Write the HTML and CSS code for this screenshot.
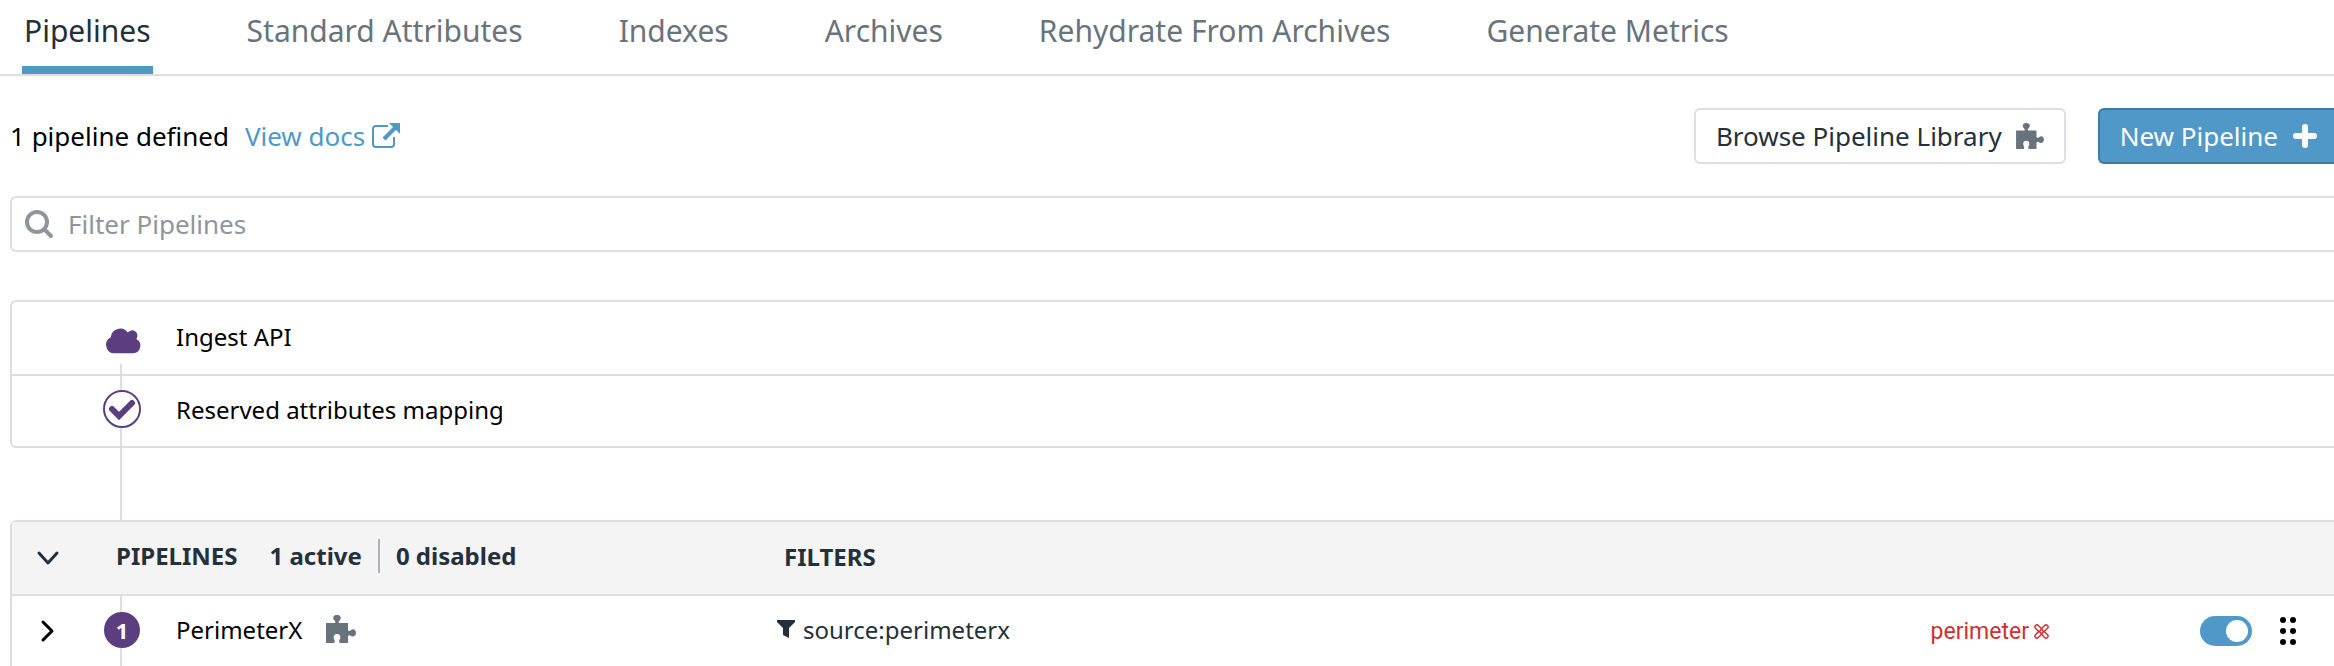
FILE: index.html
```html
<!DOCTYPE html>
<html lang="en">
<head>
    <meta charset="utf-8">
    <title>Pipelines</title>
    <link rel="stylesheet" href="styles.css">
</head>
<body>
    <svg class="sprite" aria-hidden="true">
        <symbol id="puzzle" viewBox="0 0 30 28">
            <path d="M0 8 H9 C10 7 9 6 8 5 C6 2 8 0 11 0 C14 0 16 2 14 5 C13 6 12 7 13 8 H22 V15 C23 16.500 24 16 25 15 C27 13.500 30 14.500 30 18 C30 21 27 22.500 25 21 C24 20 23 20 22 21 V28 H14 C12.500 27 13 26 14 24 C15 21 13.500 19 11 19 C8.500 19 7 21 8 24 C9 26 9 27 8 28 H0 Z"/>
        </symbol>
    </svg>

    <nav class="tabs">
        <a class="tab active" href="#">Pipelines</a>
        <a class="tab" href="#">Standard Attributes</a>
        <a class="tab" href="#">Indexes</a>
        <a class="tab" href="#">Archives</a>
        <a class="tab" href="#">Rehydrate From Archives</a>
        <a class="tab" href="#">Generate Metrics</a>
    </nav>

    <main class="content">
        <div class="toolbar">
            <span>1 pipeline defined</span>
            <a class="docs" href="#">View docs
                <svg width="30" height="28" viewBox="0 0 30 28" fill="none" stroke="currentColor" stroke-width="2">
                    <path d="M17 4 H5 Q2 4 2 7 V22 Q2 25 5 25 H20 Q23 25 23 22 V15"/>
                    <path d="M13 17 L25 5" stroke-width="4"/>
                    <path d="M18 1 H29 V12 Z" fill="currentColor" stroke="none"/>
                </svg>
            </a>
            <div class="actions">
                <button class="btn" type="button">Browse Pipeline Library
                    <svg class="grey" width="28" height="26"><use href="#puzzle"/></svg>
                </button>
                <button class="btn primary" type="button">New Pipeline
                    <svg width="26" height="26" viewBox="0 0 26 26" stroke="currentColor" stroke-width="6" stroke-linecap="round">
                        <path d="M13 4 V22 M4 13 H22"/>
                    </svg>
                </button>
            </div>
        </div>

        <label class="search">
            <svg width="30" height="30" viewBox="0 0 30 30" fill="none" stroke="currentColor" stroke-width="4">
                <circle cx="13" cy="13" r="10"/>
                <path d="M20 20 L27 27" stroke-width="4" stroke-linecap="round"/>
            </svg>
            <input type="text" placeholder="Filter Pipelines" aria-label="Filter Pipelines">
        </label>

        <section class="panel">
            <div class="row">
                <div class="step first">
                    <svg class="cloud" width="36" height="28" viewBox="0 0 38 28">
                        <path d="M9 28 A9 9 0 0 1 5 11 A10 10 0 0 1 23 6 A5.500 5.500 0 0 1 32 13 A8 8 0 0 1 29 28 Z"/>
                    </svg>
                </div>
                <span>Ingest API</span>
            </div>
            <div class="row">
                <div class="step">
                    <svg class="check" width="38" height="38" viewBox="0 0 38 38" fill="none" stroke="currentColor">
                        <circle cx="19" cy="19" r="18" fill="#fff" stroke-width="2"/>
                        <path d="M9 19 L16 26 L29 13" stroke-width="6" stroke-linecap="round"/>
                    </svg>
                </div>
                <span>Reserved attributes mapping</span>
            </div>
        </section>

        <div class="connector"></div>

        <section class="panel list">
            <header class="row head">
                <button class="toggle" type="button" aria-label="Collapse">
                    <svg width="22" height="22" viewBox="0 0 22 22"><path d="M2 6 L11 16 L20 6"/></svg>
                </button>
                <div class="summary">
                    <span>PIPELINES</span>
                    <span class="count">1 active</span>
                    <span class="count">0 disabled</span>
                </div>
                <span class="filters">FILTERS</span>
            </header>
            <div class="row pipeline">
                <button class="toggle" type="button" aria-label="Expand">
                    <svg width="22" height="22" viewBox="0 0 22 22"><path d="M6 2 L15 11 L6 20"/></svg>
                </button>
                <div class="step"><span class="badge">1</span></div>
                <div class="name">PerimeterX
                    <svg class="grey" width="30" height="28"><use href="#puzzle"/></svg>
                </div>
                <div class="query">
                    <svg width="18" height="18" viewBox="0 0 18 18"><path d="M0 0 H18 V2 L12 8 V18 L6 15 V8 L0 2 Z"/></svg>
                    source:perimeterx
                </div>
                <div class="brand">perimeter
                    <svg width="15" height="15" viewBox="0 0 15 15" fill="none" stroke="currentColor" stroke-width="1.400">
                        <g transform="rotate(45 7.500 7.500)">
                            <rect x="5.500" y="-1" width="4" height="7" rx="2"/>
                            <rect x="5.500" y="9" width="4" height="7" rx="2"/>
                            <rect x="-1" y="5.500" width="7" height="4" rx="2"/>
                            <rect x="9" y="5.500" width="7" height="4" rx="2"/>
                        </g>
                    </svg>
                </div>
                <input class="switch" type="checkbox" aria-label="Enable PerimeterX" checked>
                <svg class="drag" width="16" height="28" viewBox="0 0 16 28">
                    <circle cx="3" cy="3" r="3"/><circle cx="13" cy="3" r="3"/>
                    <circle cx="3" cy="14" r="3"/><circle cx="13" cy="14" r="3"/>
                    <circle cx="3" cy="25" r="3"/><circle cx="13" cy="25" r="3"/>
                </svg>
            </div>
        </section>
    </main>
</body>
</html>
```
FILE: styles.css
```css
* {
    box-sizing: border-box;
}

body {
    margin: 0;
    background: #fff;
    color: #000;
    font-family: "Noto Sans", sans-serif;
    font-size: 24px;
}

svg {
    flex: none;
    fill: currentColor;
    overflow: visible;
}

svg[fill="none"] {
    fill: none;
}

.sprite {
    display: none;
}

.grey {
    color: #69737b;
}

.tabs {
    display: flex;
    gap: 92px;
    height: 76px;
    padding-left: 22px;
    border-bottom: 2px solid #dddde3;
}

.tab {
    padding: 10px 2px 0;
    color: #69737b;
    font-size: 30px;
    line-height: 42px;
    text-decoration: none;
}

.tab.active {
    color: #24303a;
    border-bottom: 8px solid #5098c8;
}

.content {
    padding-left: 10px;
}

.toolbar {
    display: flex;
    align-items: center;
    margin: 32px 0;
    font-size: 26px;
}

.docs {
    display: flex;
    align-items: center;
    gap: 6px;
    margin-left: 16px;
    color: #5098c8;
    text-decoration: none;
}

.actions {
    display: flex;
    gap: 32px;
    margin-left: auto;
}

.btn {
    display: flex;
    align-items: center;
    gap: 14px;
    height: 56px;
    padding: 0 20px;
    border: 2px solid #dddde3;
    border-radius: 6px;
    background: #fff;
    color: #24303a;
    font: inherit;
}

.btn.primary {
    padding-right: 16px;
    border-color: #41799f;
    border-right: 0;
    border-radius: 6px 0 0 6px;
    background: #5098c8;
    color: #fff;
}

.search {
    display: flex;
    align-items: center;
    gap: 14px;
    height: 56px;
    padding-left: 12px;
    border: 2px solid #dddde3;
    border-right: 0;
    border-radius: 6px 0 0 6px;
    color: #8f969b;
}

.search input {
    flex: 1;
    padding: 0;
    border: 0;
    outline: 0;
    background: none;
    font: inherit;
    font-size: 26px;
}

.search input::placeholder {
    color: #8f969b;
}

.panel {
    border: 2px solid #dddde3;
    border-right: 0;
    border-radius: 6px 0 0 6px;
}

.search + .panel {
    margin-top: 48px;
}

.list {
    border-bottom: 0;
    border-radius: 6px 0 0 0;
}

.row {
    display: flex;
    align-items: center;
    height: 72px;
    padding-left: 90px;
}

.row + .row {
    border-top: 2px solid #dddde3;
}

.row > span,
.name,
.query {
    padding-bottom: 4px;
}

/* vertical line that links the steps */
.step {
    display: flex;
    align-items: center;
    justify-content: center;
    align-self: stretch;
    width: 40px;
    margin-right: 34px;
    color: #5b3e80;
    background: linear-gradient(#dddde3, #dddde3) 18px 0 / 2px 100% no-repeat;
}

.step.first {
    background-position: 18px 100%;
    background-size: 2px 10px;
}

.cloud {
    margin: 4px 0 0 4px;
}

.check {
    margin-bottom: 4px;
}

.connector {
    width: 2px;
    height: 72px;
    margin-left: 110px;
    background: #dddde3;
}

.head {
    padding-left: 0;
    background: #f4f4f5;
    color: #24303a;
    font-weight: bold;
}

.toggle {
    display: flex;
    width: 76px;
    padding: 0 0 0 25px;
    border: 0;
    background: none;
    color: inherit;
}

.toggle path {
    fill: none;
    stroke: currentColor;
    stroke-width: 3;
    stroke-linecap: round;
    stroke-linejoin: round;
}

.summary {
    display: flex;
    align-items: center;
    width: 668px;
    padding: 0 0 4px 28px;
    line-height: 34px;
}

.count {
    padding-left: 16px;
}

.count:nth-child(2) {
    margin-left: 16px;
    padding-right: 16px;
    border-right: 2px solid #b2b2ba;
}

.filters {
    padding-left: 28px;
}

.pipeline {
    padding-left: 0;
}

.pipeline .step {
    margin-left: 14px;
}

.badge {
    width: 36px;
    height: 36px;
    margin-bottom: 2px;
    border-radius: 50%;
    background: #5b3e80;
    color: #fff;
    font-size: 22px;
    font-weight: bold;
    line-height: 36px;
    text-align: center;
}

.name {
    display: flex;
    align-items: center;
    gap: 24px;
    width: 601px;
}

.query {
    display: flex;
    align-items: center;
    gap: 8px;
    color: #24303a;
}

.brand {
    display: flex;
    align-items: center;
    gap: 5px;
    margin-left: auto;
    color: #d22f31;
    font-family: Roboto, sans-serif;
    font-size: 23px;
}

.switch {
    appearance: none;
    width: 52px;
    height: 30px;
    margin: 0 28px 0 151px;
    padding: 4px;
    border-radius: 15px;
    background: #5098c8;
}

.switch::before {
    content: "";
    display: block;
    width: 22px;
    height: 22px;
    margin-left: auto;
    border-radius: 50%;
    background: #fff;
}

.drag {
    margin-right: 38px;
}
```
